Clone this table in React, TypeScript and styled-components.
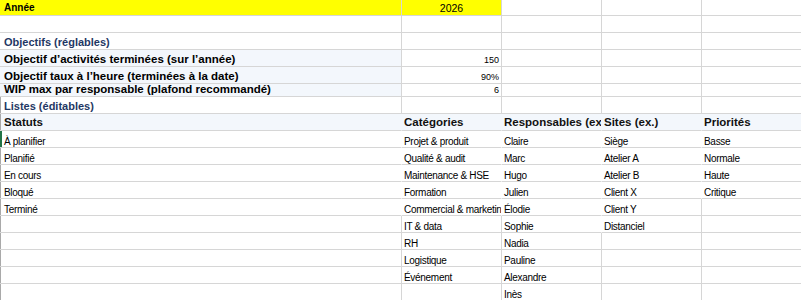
import React from "react";
import styled, { createGlobalStyle, css } from "styled-components";

const GRID = "#d6d6d6";
const TINT = "#f3f7fc";

const Global = createGlobalStyle`
  html, body { margin: 0; padding: 0; background: #fff; overflow: hidden; }
  body { font-family: "Liberation Sans", Arial, sans-serif; }
`;

type Kind = "text" | "label" | "title" | "head" | "num" | "year" | "key";
type Align = "left" | "right" | "center";
type Mark = "none" | "gray" | "green";

const Sheet = styled.div`
  display: flex;
  flex-direction: column;
  width: 802px;
`;

const Row = styled.div<{ $h: number }>`
  display: grid;
  grid-template-columns: 402px 100px 100px 100px 100px;
  height: ${(p) => p.$h}px;
`;

const kinds: Record<Kind, ReturnType<typeof css>> = {
  text: css`
    font-size: 10px;
    letter-spacing: -0.3px;
    line-height: 11px;
    color: #000;
  `,
  label: css`
    font-size: 11.5px;
    font-weight: 700;
    line-height: 13px;
    color: #000;
  `,
  title: css`
    font-size: 11px;
    font-weight: 700;
    line-height: 13px;
    color: #1f3864;
  `,
  head: css`
    font-size: 11.5px;
    font-weight: 700;
    line-height: 13px;
    color: #111;
    padding-bottom: 1px;
  `,
  num: css`
    font-size: 9px;
    line-height: 10px;
    color: #000;
    padding-bottom: 1px;
  `,
  year: css`
    font-size: 10.5px;
    line-height: 12px;
    color: #000;
    padding-bottom: 1px;
  `,
  key: css`
    font-size: 10px;
    font-weight: 700;
    line-height: 12px;
    color: #000;
    padding-bottom: 1px;
  `,
};

const Cell = styled.div<{
  $bg: string;
  $hideRight: boolean;
  $align: Align;
  $kind: Kind;
  $mark: Mark;
  $first: boolean;
}>`
  box-sizing: border-box;
  display: flex;
  align-items: flex-end;
  justify-content: ${(p) =>
    p.$align === "right" ? "flex-end" : p.$align === "center" ? "center" : "flex-start"};
  overflow: hidden;
  white-space: nowrap;
  background: ${(p) => p.$bg};
  border-right: 1px solid ${(p) => (p.$hideRight ? p.$bg : GRID)};
  border-bottom: 1px solid ${GRID};
  padding-left: ${(p) => (p.$first ? 4 : 2)}px;
  padding-right: 2px;
  box-shadow: ${(p) =>
    p.$mark === "green"
      ? "inset 2px 0 0 #217346"
      : p.$mark === "gray"
      ? "inset 1px 0 0 #a9a9a9"
      : "none"};
  ${(p) => kinds[p.$kind]}
`;

type CellDef = {
  t?: string;
  kind?: Kind;
  align?: Align;
  bg?: string;
  hide?: boolean;
};

type RowDef = { h: number; mark?: Mark; cells: CellDef[] };

const YEL = "#ffff00";

const blank = (n: number): CellDef[] => Array.from({ length: n }, () => ({}));

const statuts = ["À planifier", "Planifié", "En cours", "Bloqué", "Terminé"];
const categories = [
  "Projet & produit",
  "Qualité & audit",
  "Maintenance & HSE",
  "Formation",
  "Commercial & marketing",
  "IT & data",
  "RH",
  "Logistique",
  "Événement",
];
const responsables = [
  "Claire",
  "Marc",
  "Hugo",
  "Julien",
  "Élodie",
  "Sophie",
  "Nadia",
  "Pauline",
  "Alexandre",
  "Inès",
];
const sites = ["Siège", "Atelier A", "Atelier B", "Client X", "Client Y", "Distanciel"];
const priorites = ["Basse", "Normale", "Haute", "Critique"];

const listRows: RowDef[] = Array.from({ length: 10 }, (_, i) => {
  const hideA = i < 5;
  const hideB = i < 5;
  const hideC = i < 6;
  const hideD = i < 4;
  return {
    h: 17,
    mark: i === 0 ? "green" : "gray",
    cells: [
      { t: statuts[i], hide: hideA },
      { t: categories[i], hide: hideB },
      { t: responsables[i], hide: hideC },
      { t: sites[i], hide: hideD },
      { t: priorites[i] },
    ],
  };
});

const rows: RowDef[] = [
  {
    h: 16,
    cells: [
      { t: "Année", kind: "key", bg: YEL },
      { t: "2026", kind: "year", align: "center", bg: YEL },
      ...blank(3),
    ],
  },
  { h: 17, cells: blank(5) },
  { h: 17, cells: [{ t: "Objectifs (réglables)", kind: "title" }, ...blank(4)] },
  {
    h: 17,
    cells: [
      { t: "Objectif d’activités terminées (sur l’année)", kind: "label", bg: TINT },
      { t: "150", kind: "num", align: "right" },
      ...blank(3),
    ],
  },
  {
    h: 17,
    cells: [
      { t: "Objectif taux à l’heure (terminées à la date)", kind: "label", bg: TINT },
      { t: "90%", kind: "num", align: "right" },
      ...blank(3),
    ],
  },
  {
    h: 13,
    cells: [
      { t: "WIP max par responsable (plafond recommandé)", kind: "label", bg: TINT },
      { t: "6", kind: "num", align: "right" },
      ...blank(3),
    ],
  },
  { h: 17, mark: "gray", cells: [{ t: "Listes (éditables)", kind: "title" }, ...blank(4)] },
  {
    h: 17,
    mark: "gray",
    cells: [
      { t: "Statuts", kind: "head", bg: TINT, hide: true },
      { t: "Catégories", kind: "head", bg: TINT, hide: true },
      { t: "Responsables (ex.)", kind: "head", bg: TINT, hide: true },
      { t: "Sites (ex.)", kind: "head", bg: TINT, hide: true },
      { t: "Priorités", kind: "head", bg: TINT, hide: true },
    ],
  },
  ...listRows,
];

export default function App() {
  return (
    <>
      <Global />
      <Sheet>
        {rows.map((r, ri) => (
          <Row key={ri} $h={r.h}>
            {r.cells.map((c, ci) => (
              <Cell
                key={ci}
                $bg={c.bg ?? "#ffffff"}
                $hideRight={!!c.hide}
                $align={c.align ?? "left"}
                $kind={c.kind ?? "text"}
                $mark={ci === 0 ? r.mark ?? "none" : "none"}
                $first={ci === 0}
              >
                {c.t ?? ""}
              </Cell>
            ))}
          </Row>
        ))}
      </Sheet>
    </>
  );
}
